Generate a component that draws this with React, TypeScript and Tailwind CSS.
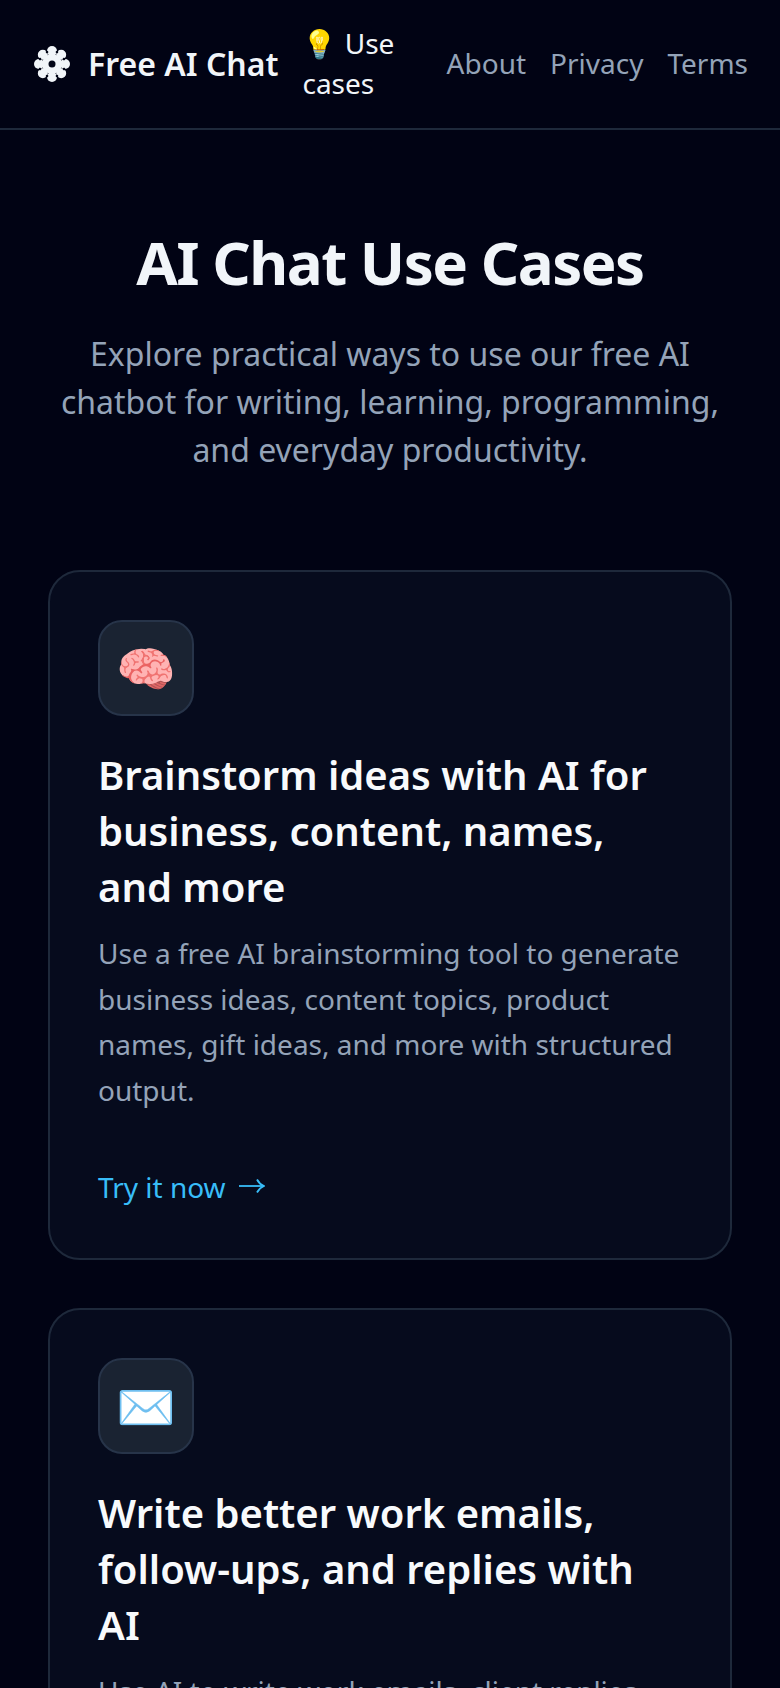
const cases = [
  {
    icon: '🧠',
    title: 'Brainstorm ideas with AI for business, content, names, and more',
    text: 'Use a free AI brainstorming tool to generate business ideas, content topics, product names, gift ideas, and more with structured output.',
  },
  {
    icon: '✉️',
    title: 'Write better work emails, follow-ups, and replies with AI',
    text: 'Use AI to write work emails, client replies, follow-ups, and professional messages in seconds with the right tone.',
  },
]

function Logo() {
  const petals = [0, 45, 90, 135, 180, 225, 270, 315]
  return (
    <svg viewBox="0 0 40 40" className="w-10 h-10 shrink-0">
      {petals.map(a => (
        <circle key={a} cx="20" cy="7" r="5" fill="#f1f5f9" transform={`rotate(${a} 20 20)`} />
      ))}
      {petals.map(a => (
        <circle key={a} cx="20" cy="7" r="1.3" fill="#020617" transform={`rotate(${a + 22.5} 20 20)`} />
      ))}
      <circle cx="20" cy="20" r="10" fill="#f1f5f9" />
      <circle cx="20" cy="20" r="3.5" fill="#020617" />
    </svg>
  )
}

function Arrow() {
  return (
    <svg viewBox="0 0 26 16" className="w-[26px] h-4 -mt-0.5 ml-px" fill="none" stroke="#38bdf8" strokeWidth="1.8">
      <path d="M0 8h25" />
      <path d="M18 1.5c1.5 3 3.8 5.2 7 6.5c-3.2 1.3-5.5 3.5-7 6.5" />
    </svg>
  )
}

export default function App() {
  return (
    <div className="h-[1688px] overflow-hidden bg-[#010314] font-['Noto_Sans',sans-serif]">
      <header className="h-[130px] flex items-center gap-6 px-8 border-b-2 border-[#1e293b]">
        <div className="flex items-center gap-4 shrink-0">
          <Logo />
          <span className="text-[32px] font-semibold text-[#f1f5f9]">Free AI Chat</span>
        </div>
        <nav className="flex-1 flex items-center gap-6 -mt-0.5 text-[28px] text-[#94a3b8]">
          <a className="flex-1 leading-[40px] text-[#f1f5f9]">💡 Use cases</a>
          <a>About</a>
          <a>Privacy</a>
          <a>Terms</a>
        </nav>
      </header>

      <main className="px-12 pt-24">
        <div className="text-center mb-24">
          <h1 className="text-[60px] leading-[72px] font-bold tracking-[-0.025em] text-[#f1f5f9] mb-8">AI Chat Use Cases</h1>
          <p className="text-[32px] leading-[48px] text-[#94a3b8] -mx-4">
            Explore practical ways to use our free AI chatbot for writing, learning, programming, and everyday productivity.
          </p>
        </div>

        <div className="flex flex-col gap-12">
          {cases.map(c => (
            <section key={c.title} className="bg-[#060b1d] border-2 border-[#1e293b] rounded-[32px] p-12">
              <div className="w-24 h-24 flex items-center justify-center rounded-3xl bg-[#1a2332] border-2 border-[#273449] text-[48px] mb-[31px]">
                {c.icon}
              </div>
              <h2 className="text-[40px] leading-[56px] font-semibold text-[#f8fafc] mb-4">{c.title}</h2>
              <p className="text-[28px] leading-[45.6px] text-[#94a3b8] mb-[51px]">{c.text}</p>
              <a className="flex items-center gap-3 text-[28px] leading-[46px] text-[#38bdf8]">
                Try it now <Arrow />
              </a>
            </section>
          ))}
        </div>
      </main>
    </div>
  )
}
